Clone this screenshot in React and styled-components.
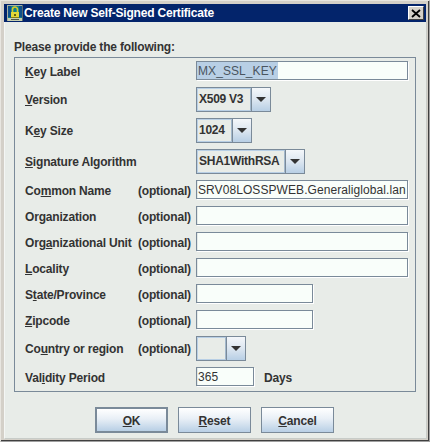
import React from "react";
import styled, { createGlobalStyle } from "styled-components";

const Global = createGlobalStyle`
  html, body { margin: 0; padding: 0; background: #d4d0c8; }
  #root { width: 430px; height: 442px; }
`;

const Frame = styled.div`
  box-sizing: border-box;
  width: 430px;
  height: 442px;
  padding: 3px 2px 2px 3px;
  background: #d4d0c8;
  border-bottom: 1px solid #a0a0a0;
  border-right: 1px solid #a0a0a0;
  border-top: 1px solid #e8e6e0;
  border-left: 1px solid #e8e6e0;
  box-shadow: inset -1px -1px 0 #404040;
  display: flex;
  flex-direction: column;
  font-family: "Liberation Sans", Arial, sans-serif;
  font-size: 12px;
  font-weight: bold;
  letter-spacing: -0.18px;
  color: #333333;
`;

const TitleBar = styled.div`
  height: 18px;
  flex: none;
  background: #03246b;
  display: flex;
  align-items: center;
  padding: 0 2px 0 3px;
  margin-right: 1px;
  color: #ffffff;
`;

const TitleText = styled.span`
  margin-left: 1px;
  font-size: 12px;
  letter-spacing: -0.2px;
`;

const CloseButton = styled.div`
  margin-left: auto;
  box-sizing: border-box;
  width: 16px;
  height: 14px;
  background: #d4d0c8;
  border: 1px solid;
  border-color: #ffffff #404040 #404040 #ffffff;
  display: flex;
  align-items: center;
  justify-content: center;
`;

const Body = styled.div`
  flex: 1;
  background: #e8ece8;
  border-left: 1px solid #f4f6f4;
  border-right: 1px solid #c8ccc8;
  border-bottom: 1px solid #c8ccc8;
  padding: 18px 10px 0 9px;
  display: flex;
  flex-direction: column;
`;

const Heading = styled.div`
  height: 14px;
  line-height: 14px;
  margin-bottom: 3px;
`;

const Panel = styled.div`
  box-sizing: border-box;
  width: 402px;
  height: 335px;
  border: 1px solid #7a8a99;
  padding: 3px 6px 0 10px;
  display: flex;
  flex-direction: column;
`;

const Row = styled.div`
  display: flex;
  align-items: center;
  height: ${(p) => p.$h}px;
  margin-bottom: ${(p) => p.$gap}px;
  flex: none;
`;

const Label = styled.div`
  width: 113px;
  flex: none;
  white-space: nowrap;
  padding-top: ${(p) => (p.$low ? 2 : 0)}px;
`;

const Optional = styled.div`
  width: 58px;
  flex: none;
  white-space: nowrap;
  padding-top: ${(p) => (p.$low ? 2 : 0)}px;
`;

const Wide = styled.div`
  width: 171px;
  flex: none;
  white-space: nowrap;
  padding-top: ${(p) => (p.$low ? 2 : 0)}px;
`;

const Input = styled.div`
  box-sizing: border-box;
  width: ${(p) => p.$w}px;
  height: 19px;
  flex: none;
  background: #f9fefa;
  border: 1px solid #7a8a99;
  box-shadow: 1px 1px 0 #ffffff, inset 1px 0 0 #e4eae8;
  padding: 0 1px;
  font-weight: normal;
  font-size: 12px;
  letter-spacing: 0.08px;
  line-height: 18px;
  color: #333333;
  white-space: nowrap;
  overflow: hidden;
`;

const Selected = styled.span`
  background: #b8cfe5;
  color: #4a5560;
  display: inline-block;
  height: 17px;
  padding: 0 1px;
  margin-left: -1px;
`;

const Combo = styled.div`
  box-sizing: border-box;
  width: ${(p) => p.$w}px;
  height: 25px;
  border: 1px solid #7a8a99;
  display: flex;
  flex: none;
  background: #e8ece8;
`;

const ComboValue = styled.div`
  flex: 1;
  box-sizing: border-box;
  border: 1px solid #b8cfe5;
  border-right: 1px solid #a3b8cc;
  padding-left: 1px;
  letter-spacing: -0.25px;
  line-height: 21px;
  white-space: nowrap;
`;

const ComboArrow = styled.div`
  width: 18px;
  flex: none;
  border-left: 1px solid #7a8a99;
  background: linear-gradient(#f4f7fa 0%, #dce6f0 50%, #b8cfe5 100%);
  display: flex;
  align-items: center;
  justify-content: center;
`;

const Arrow = styled.div`
  width: 0;
  height: 0;
  border-left: 5px solid transparent;
  border-right: 5px solid transparent;
  border-top: 5px solid #333333;
`;

const DaysText = styled.div`
  margin-left: 10px;
  padding-top: 2px;
`;

const Buttons = styled.div`
  display: flex;
  gap: 10px;
  margin: 15px 0 0 81px;
`;

const Button = styled.div`
  box-sizing: border-box;
  width: 73px;
  height: 26px;
  padding-top: 1px;
  border: ${(p) => (p.$focus ? "2px solid #7a8a99" : "1px solid #7a8a99")};
  background: linear-gradient(#ffffff 0%, #e8eff6 45%, #b8cfe5 100%);
  display: flex;
  align-items: center;
  justify-content: center;
`;

const LockIcon = () => (
  <svg width="16" height="16" viewBox="0 0 16 16" shapeRendering="crispEdges">
    <rect width="16" height="16" fill="#0e7f8c" />
    <rect width="16" height="1" fill="#a8b0a0" />
    <rect width="1" height="16" fill="#a8b0a0" />
    <rect x="15" width="1" height="16" fill="#5a6a70" />
    <rect x="1" y="1" width="3" height="11" fill="#10508a" />
    <rect x="12" y="1" width="3" height="11" fill="#10508a" />
    <rect x="1" y="13" width="14" height="3" fill="#c8d0b0" />
    <rect x="4" y="14" width="8" height="1" fill="#505848" />
    <path d="M5.5 8V4.5a2.5 2.5 0 0 1 5 0V8" fill="none" stroke="#d8c828" strokeWidth="1.6" shapeRendering="auto" />
    <rect x="4" y="7" width="8" height="6" fill="#e4d838" />
    <rect x="4" y="12" width="8" height="1" fill="#8a7c18" />
    <rect x="7" y="9" width="2" height="2" fill="#6a6010" />
  </svg>
);

const CloseIcon = () => (
  <svg width="10" height="9" viewBox="0 0 10 9">
    <path d="M1 1l8 7M9 1l-8 7" stroke="#000" strokeWidth="1.8" fill="none" />
  </svg>
);

const ComboField = ({ w, children }) => (
  <Combo $w={w}>
    <ComboValue>{children}</ComboValue>
    <ComboArrow>
      <Arrow />
    </ComboArrow>
  </Combo>
);

const OptionalRow = ({ label, w }) => (
  <Row $h={19} $gap={7}>
    <Label $low>{label}</Label>
    <Optional $low>(optional)</Optional>
    <Input $w={w} />
  </Row>
);

export default function App() {
  return (
    <>
      <Global />
      <Frame>
        <TitleBar>
          <LockIcon />
          <TitleText>Create New Self-Signed Certificate</TitleText>
          <CloseButton>
            <CloseIcon />
          </CloseButton>
        </TitleBar>
        <Body>
          <Heading>Please provide the following:</Heading>
          <Panel>
            <Row $h={19} $gap={7}>
              <Wide $low><u>K</u>ey Label</Wide>
              <Input $w={212}><Selected>MX_SSL_KEY</Selected></Input>
            </Row>
            <Row $h={25} $gap={6}>
              <Wide><u>V</u>ersion</Wide>
              <ComboField w={75}>X509 V3</ComboField>
            </Row>
            <Row $h={25} $gap={6}>
              <Wide>K<u>e</u>y Size</Wide>
              <ComboField w={56}>1024</ComboField>
            </Row>
            <Row $h={25} $gap={6}>
              <Wide><u>S</u>ignature Algorithm</Wide>
              <ComboField w={109}>SHA1WithRSA</ComboField>
            </Row>
            <Row $h={19} $gap={7}>
              <Label $low>Co<u>m</u>mon Name</Label>
              <Optional $low>(optional)</Optional>
              <Input $w={212}>SRV08LOSSPWEB.Generaliglobal.lan</Input>
            </Row>
            <OptionalRow label={<>Or<u>g</u>anization</>} w={212} />
            <OptionalRow label={<>Org<u>a</u>nizational Unit</>} w={212} />
            <OptionalRow label={<><u>L</u>ocality</>} w={212} />
            <OptionalRow label={<>S<u>t</u>ate/Province</>} w={117} />
            <OptionalRow label={<><u>Z</u>ipcode</>} w={117} />
            <Row $h={25} $gap={6}>
              <Label>Co<u>u</u>ntry or region</Label>
              <Optional>(optional)</Optional>
              <ComboField w={50} />
            </Row>
            <Row $h={19} $gap={0}>
              <Wide $low>Val<u>i</u>dity Period</Wide>
              <Input $w={58}>365</Input>
              <DaysText>Days</DaysText>
            </Row>
          </Panel>
          <Buttons>
            <Button $focus><span><u>O</u>K</span></Button>
            <Button><span><u>R</u>eset</span></Button>
            <Button><span><u>C</u>ancel</span></Button>
          </Buttons>
        </Body>
      </Frame>
    </>
  );
}
